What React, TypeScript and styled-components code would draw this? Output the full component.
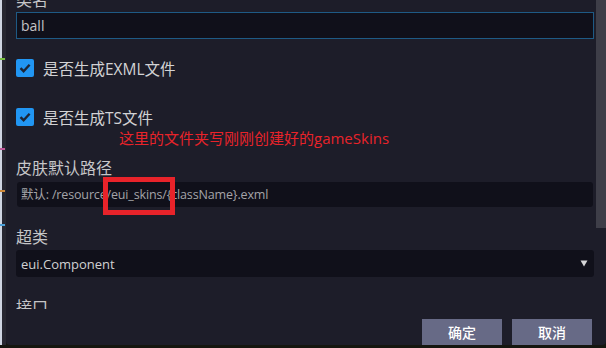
import React from 'react';
import styled, { createGlobalStyle } from 'styled-components';

const GlobalStyle = createGlobalStyle`
  html, body {
    margin: 0;
    padding: 0;
    background: #15160f;
    overflow: hidden;
  }
  body {
    font-family: "Open Sans", "Noto Sans CJK SC", sans-serif;
  }
`;

const Screen = styled.div`
  display: flex;
  width: 606px;
  height: 348px;
  overflow: hidden;
  background: #15160f;
`;

const SideStrip = styled.div`
  width: 6px;
  height: 345px;
  flex-shrink: 0;
  background: linear-gradient(to right, #cfd6e2 0 2px, #272731 2px);
  display: flex;
  flex-direction: column;
`;

const StripMark = styled.div<{ $color: string; $top: number }>`
  margin-top: ${(p) => p.$top}px;
  height: 2px;
  width: 5px;
  background: ${(p) => p.$color};
`;

const Panel = styled.div`
  position: relative;
  flex: 1;
  height: 345px;
  background: #1d1d29;
  border-radius: 0 0 4px 4px;
  display: flex;
  flex-direction: column;
  overflow: hidden;
`;

const ScrollArea = styled.div`
  height: 309px;
  flex-shrink: 0;
  display: flex;
  overflow: hidden;
`;

const Form = styled.div`
  flex: 1;
  padding: 0 2px 0 10px;
  display: flex;
  flex-direction: column;
`;

const ScrollThumb = styled.div`
  width: 10px;
  height: 228px;
  background: #3e3e48;
  flex-shrink: 0;
`;

const Label = styled.div<{ $offset?: number }>`
  flex-shrink: 0;
  margin-top: ${(p) => p.$offset ?? 0}px;
  font-size: 16px;
  line-height: 20px;
  color: #c6c6c8;
  white-space: nowrap;
`;

const TextInput = styled.div`
  flex-shrink: 0;
  margin-top: 2px;
  height: 25px;
  border: 1px solid #1e5a85;
  background: #10101a;
  color: #c4c4c6;
  font-size: 14px;
  line-height: 25px;
  padding-left: 4px;
`;

const CheckRow = styled.div<{ $offset: number }>`
  flex-shrink: 0;
  margin-top: ${(p) => p.$offset}px;
  display: flex;
  align-items: center;
  gap: 9px;
  height: 20px;
  font-size: 15.5px;
  color: #d2d2d4;
`;

const CheckBox = styled.div`
  width: 18px;
  height: 18px;
  border-radius: 2px;
  background: #2196f3;
  display: flex;
  align-items: center;
  justify-content: center;
`;

const PathField = styled.div`
  flex-shrink: 0;
  margin: 4px 1px 0 1px;
  height: 25px;
  border-radius: 3px;
  background: #10101a;
  color: #a4a4a8;
  font-size: 12.5px;
  letter-spacing: -0.15px;
  line-height: 25px;
  padding-left: 4px;
  white-space: nowrap;
`;

const SelectField = styled.div`
  flex-shrink: 0;
  margin-top: 3px;
  height: 27px;
  border-radius: 3px;
  background: #10101a;
  color: #d0d0d2;
  font-size: 13px;
  display: flex;
  align-items: center;
  justify-content: space-between;
  padding: 0 6px 0 5px;
`;

const Footer = styled.div`
  display: flex;
  justify-content: flex-end;
  gap: 10px;
  padding: 10px 14px 0 0;
`;

const Button = styled.div`
  width: 80px;
  height: 26px;
  background: #676a86;
  color: #ffffff;
  font-size: 14px;
  font-weight: 500;
  display: flex;
  align-items: center;
  justify-content: center;
`;

const Note = styled.div`
  position: absolute;
  left: 113px;
  top: 128px;
  font-size: 15px;
  line-height: 20px;
  color: #e8232a;
  white-space: nowrap;
`;

const Highlight = styled.div`
  position: absolute;
  left: 97px;
  top: 177px;
  width: 62px;
  height: 28px;
  border: 5px solid #e8232a;
`;

const Check = () => (
  <svg width="14" height="14" viewBox="0 0 14 14">
    <path d="M2.5 7.2 L5.6 10.2 L11.6 3.8" fill="none" stroke="#1d2535" strokeWidth="2.4" />
  </svg>
);

const Caret = () => (
  <svg width="8" height="7" viewBox="0 0 8 7">
    <path d="M0.5 0.5 H7.5 L4 6.5 Z" fill="#d6d6d8" />
  </svg>
);

export default function App() {
  return (
    <>
      <GlobalStyle />
      <Screen>
        <SideStrip>
          <StripMark $color="#7ac043" $top={58} />
          <StripMark $color="#c05a9a" $top={88} />
          <StripMark $color="#d08a3a" $top={40} />
          <StripMark $color="#4aa0d8" $top={32} />
        </SideStrip>
        <Panel>
          <ScrollArea>
            <Form>
              <Label $offset={-10}>类名</Label>
              <TextInput>ball</TextInput>
              <CheckRow $offset={19}>
                <CheckBox>
                  <Check />
                </CheckBox>
                是否生成EXML文件
              </CheckRow>
              <CheckRow $offset={29}>
                <CheckBox>
                  <Check />
                </CheckBox>
                是否生成TS文件
              </CheckRow>
              <Label $offset={31}>皮肤默认路径</Label>
              <PathField>默认: /resource/eui_skins/{'{'}className{'}'}.exml</PathField>
              <Label $offset={20}>超类</Label>
              <SelectField>
                eui.Component
                <Caret />
              </SelectField>
              <Label $offset={20}>接口</Label>
            </Form>
            <ScrollThumb />
          </ScrollArea>
          <Footer>
            <Button>确定</Button>
            <Button>取消</Button>
          </Footer>
          <Note>这里的文件夹写刚刚创建好的gameSkins</Note>
          <Highlight />
        </Panel>
      </Screen>
    </>
  );
}
